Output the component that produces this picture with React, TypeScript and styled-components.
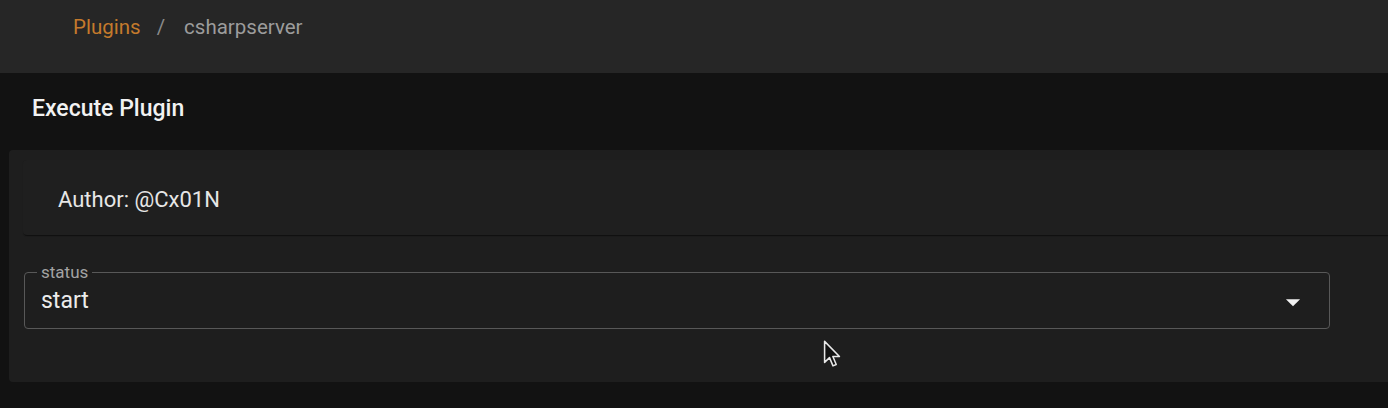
import React from "react";
import styled, { createGlobalStyle } from "styled-components";

const Global = createGlobalStyle`
  html, body { margin: 0; padding: 0; background: #121212; }
  body { font-family: Roboto, "Liberation Sans", sans-serif; overflow: hidden; }
  * { box-sizing: border-box; }
`;

const Page = styled.div`
  position: relative;
  width: 1388px;
  height: 408px;
  background: #121212;
  overflow: hidden;
`;

const Header = styled.header`
  height: 73px;
  background: #262626;
  display: flex;
  align-items: flex-start;
  padding: 15px 0 0 73px;
  font-size: 20.5px;
  line-height: 24px;
`;

const Crumb = styled.span<{ $active?: boolean }>`
  color: ${(p) => (p.$active ? "#c47a2c" : "#9c9c9c")};
`;

const Sep = styled.span`
  color: #8a8a8a;
  margin: 0 19px 0 16px;
`;

const Title = styled.h1`
  margin: 0;
  padding: 24px 0 0 32px;
  font-size: 23px;
  line-height: 24px;
  font-weight: 500;
  color: #f2f2f2;
`;

const Card = styled.section`
  margin: 29px 0 0 9px;
  width: calc(100% + 40px);
  height: 232px;
  background: #1e1e1e;
  border-radius: 4px;
  padding: 10px 14px;
  display: flex;
  flex-direction: column;
`;

const AuthorBox = styled.div`
  height: 75px;
  display: flex;
  align-items: center;
  padding: 4px 0 0 35px;
  background: #1f1f1f;
  border-radius: 4px;
  box-shadow: 0 2px 1px -1px rgba(0, 0, 0, 0.35), 0 1px 1px 0 rgba(0, 0, 0, 0.2);
  font-size: 22px;
  color: #e6e6e6;
`;

const Field = styled.div`
  position: relative;
  margin: 37px 0 0 1px;
  width: 1306px;
  height: 57px;
  border: 1px solid #585858;
  border-radius: 4px;
  display: flex;
  align-items: center;
  justify-content: space-between;
  padding: 0 19px 0 16px;
`;

const FieldLabel = styled.label`
  position: absolute;
  left: 12px;
  top: -11px;
  padding: 0 4px;
  background: #1e1e1e;
  font-size: 17px;
  line-height: 20px;
  color: #a3a3a3;
`;

const Value = styled.span`
  font-size: 23px;
  color: #ececec;
  line-height: 28px;
`;

const Arrow = styled.svg`
  width: 34px;
  height: 34px;
  fill: #f2f2f2;
  margin-top: 2px;
`;

const Cursor = styled.svg`
  position: absolute;
  left: 823px;
  top: 340px;
  width: 20px;
  height: 28px;
`;

export default function App() {
  return (
    <>
      <Global />
      <Page>
        <Header>
          <Crumb $active>Plugins</Crumb>
          <Sep>/</Sep>
          <Crumb>csharpserver</Crumb>
        </Header>
        <Title>Execute Plugin</Title>
        <Card>
          <AuthorBox>Author: @Cx01N</AuthorBox>
          <Field>
            <FieldLabel>status</FieldLabel>
            <Value>start</Value>
            <Arrow viewBox="0 0 24 24">
              <path d="M7 10l5 5 5-5z" />
            </Arrow>
          </Field>
        </Card>
        <Cursor viewBox="0 0 14 20">
          <path
            d="M1 1 L1 16 L4.5 12.6 L7 18.5 L9.3 17.5 L6.9 11.8 L11.6 11.8 Z"
            fill="#111"
            stroke="#e8e8e8"
            strokeWidth="1.1"
            strokeLinejoin="round"
          />
        </Cursor>
      </Page>
    </>
  );
}
